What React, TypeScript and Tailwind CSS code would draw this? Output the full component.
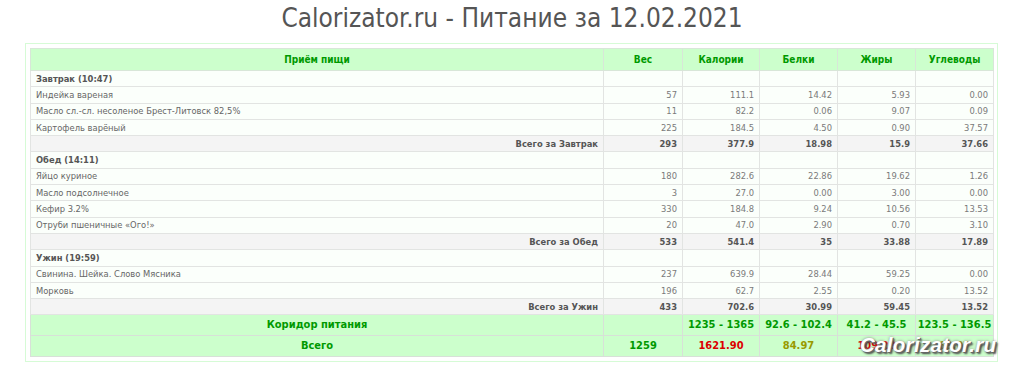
import React from 'react';

type Item = { name: string; w: string; kcal: string; p: string; f: string; c: string };
type Meal = { title: string; items: Item[]; total: string[]; label: string };

const meals: Meal[] = [
  {
    title: 'Завтрак (10:47)',
    label: 'Всего за Завтрак',
    items: [
      { name: 'Индейка вареная', w: '57', kcal: '111.1', p: '14.42', f: '5.93', c: '0.00' },
      { name: 'Масло сл.-сл. несоленое Брест-Литовск 82,5%', w: '11', kcal: '82.2', p: '0.06', f: '9.07', c: '0.09' },
      { name: 'Картофель варёный', w: '225', kcal: '184.5', p: '4.50', f: '0.90', c: '37.57' },
    ],
    total: ['293', '377.9', '18.98', '15.9', '37.66'],
  },
  {
    title: 'Обед (14:11)',
    label: 'Всего за Обед',
    items: [
      { name: 'Яйцо куриное', w: '180', kcal: '282.6', p: '22.86', f: '19.62', c: '1.26' },
      { name: 'Масло подсолнечное', w: '3', kcal: '27.0', p: '0.00', f: '3.00', c: '0.00' },
      { name: 'Кефир 3.2%', w: '330', kcal: '184.8', p: '9.24', f: '10.56', c: '13.53' },
      { name: 'Отруби пшеничные «Ого!»', w: '20', kcal: '47.0', p: '2.90', f: '0.70', c: '3.10' },
    ],
    total: ['533', '541.4', '35', '33.88', '17.89'],
  },
  {
    title: 'Ужин (19:59)',
    label: 'Всего за Ужин',
    items: [
      { name: 'Свинина. Шейка. Слово Мясника', w: '237', kcal: '639.9', p: '28.44', f: '59.25', c: '0.00' },
      { name: 'Морковь', w: '196', kcal: '62.7', p: '2.55', f: '0.20', c: '13.52' },
    ],
    total: ['433', '702.6', '30.99', '59.45', '13.52'],
  },
];

const td = 'border border-[#e2e4e2] px-[5px] h-[16.3px] py-0';
const gtd = 'border border-[#d8e0d8] text-center';

export default function App() {
  return (
    <div className="w-[1024px] h-[368px] bg-white overflow-hidden relative font-['DejaVu_Sans',Verdana,sans-serif] [font-stretch:condensed]">
      <h1 className="text-center text-[26px] leading-[28px] pt-[4px] text-[#555]">
        Calorizator.ru - Питание за 12.02.2021
      </h1>
      <div className="ml-[25px] mt-[11px] w-[973px] border border-[#d6fbd6] p-[4px]">
        <table className="w-[963px] table-fixed border-collapse text-[9.3px] leading-[12px] border border-[#cfd6cf]">
          <colgroup>
            <col className="w-[573px]" />
            <col className="w-[79px]" />
            <col className="w-[77px]" />
            <col className="w-[78px]" />
            <col className="w-[78px]" />
            <col className="w-[78px]" />
          </colgroup>
          <thead>
            <tr className="bg-[#ccffcc] text-[#009900] font-bold text-[10px]">
              <th className="border border-[#d8e6d8] h-[22px] text-center">Приём пищи</th>
              <th className="border border-[#d8e6d8] text-center">Вес</th>
              <th className="border border-[#d8e6d8] text-center">Калории</th>
              <th className="border border-[#d8e6d8] text-center">Белки</th>
              <th className="border border-[#d8e6d8] text-center">Жиры</th>
              <th className="border border-[#d8e6d8] text-center">Углеводы</th>
            </tr>
          </thead>
          <tbody>
            {meals.map((m) => (
              <React.Fragment key={m.title}>
                <tr className="bg-[#fbfffb]">
                  <td className={`${td} font-bold text-[#555]`}>{m.title}</td>
                  <td className={td}></td>
                  <td className={td}></td>
                  <td className={td}></td>
                  <td className={td}></td>
                  <td className={td}></td>
                </tr>
                {m.items.map((it) => (
                  <tr key={it.name} className="bg-[#fbfffb] text-[#7a7a7a]">
                    <td className={`${td} text-[#666]`}>{it.name}</td>
                    <td className={`${td} text-right`}>{it.w}</td>
                    <td className={`${td} text-right`}>{it.kcal}</td>
                    <td className={`${td} text-right`}>{it.p}</td>
                    <td className={`${td} text-right`}>{it.f}</td>
                    <td className={`${td} text-right`}>{it.c}</td>
                  </tr>
                ))}
                <tr className="bg-[#f4f4f4] font-bold text-[#555]">
                  <td className={`${td} text-right`}>{m.label}</td>
                  {m.total.map((v, i) => (
                    <td key={i} className={`${td} text-right`}>{v}</td>
                  ))}
                </tr>
              </React.Fragment>
            ))}
            <tr className="bg-[#ccffcc] text-[#009900] font-bold text-[11px]">
              <td className={`${gtd} h-[21px]`}>Коридор питания</td>
              <td className={gtd}></td>
              <td className={gtd}>1235 - 1365</td>
              <td className={gtd}>92.6 - 102.4</td>
              <td className={gtd}>41.2 - 45.5</td>
              <td className={gtd}>123.5 - 136.5</td>
            </tr>
            <tr className="bg-[#ccffcc] font-bold text-[11px]">
              <td className={`${gtd} h-[21px] text-[#009900]`}>Всего</td>
              <td className={`${gtd} text-[#009900]`}>1259</td>
              <td className={`${gtd} text-[#dd0000]`}>1621.90</td>
              <td className={`${gtd} text-[#999900]`}>84.97</td>
              <td className={`${gtd} text-[#dd0000]`}>109.23</td>
              <td className={`${gtd} text-[#999900]`}>69.07</td>
            </tr>
          </tbody>
        </table>
      </div>
      <div className="absolute left-[860px] top-[332px] text-[20.5px] leading-[26px] font-bold italic text-white font-['Liberation_Sans',Arial,sans-serif] [font-stretch:normal] [text-shadow:1px_1px_0_#666,2px_2px_2px_#444,0_0_3px_#888] tracking-[0.3px]">
        Calorizator.ru
      </div>
    </div>
  );
}
